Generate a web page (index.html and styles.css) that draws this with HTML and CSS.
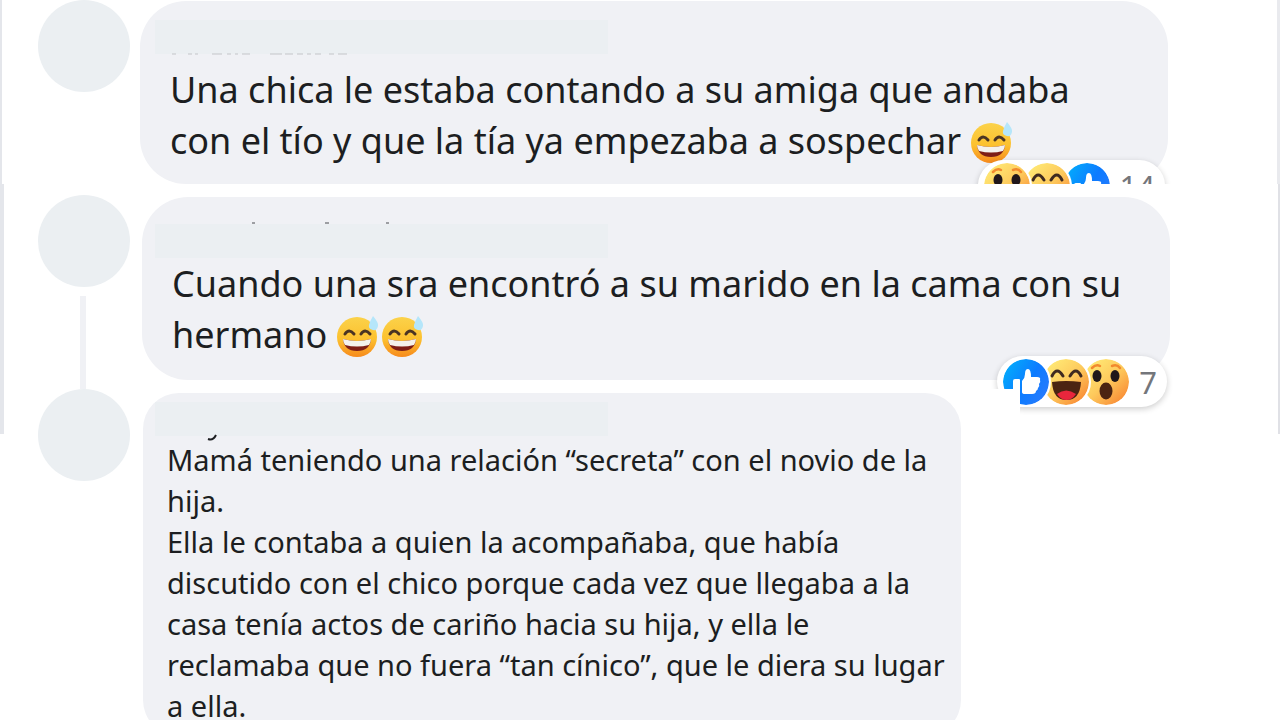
FILE: index.html
```html
<!DOCTYPE html>
<html lang="es">
<head>
	<meta charset="UTF-8">
	<title>Comentarios</title>
	<link rel="stylesheet" href="styles.css">
</head>
<body>
	<svg class="defs" aria-hidden="true">
		<defs>
			<linearGradient id="gSweat" x1="0" y1="0" x2="0" y2="1">
				<stop offset="0" stop-color="#fbd24a"/>
				<stop offset=".55" stop-color="#fcc12f"/>
				<stop offset="1" stop-color="#f78a1c"/>
			</linearGradient>
			<linearGradient id="gFace" x1=".15" y1=".1" x2=".9" y2=".9">
				<stop offset="0" stop-color="#ffe874"/>
				<stop offset=".5" stop-color="#fdc95c"/>
				<stop offset="1" stop-color="#f98a34"/>
			</linearGradient>
			<linearGradient id="gLike" x1="0" y1=".2" x2="1" y2=".8">
				<stop offset="0" stop-color="#02adfc"/>
				<stop offset=".55" stop-color="#0d7bff"/>
				<stop offset="1" stop-color="#2a7bfd"/>
			</linearGradient>
			<symbol id="sweat" viewBox="0 0 42 42">
				<circle cx="20" cy="21" r="20" fill="url(#gSweat)"/>
				<path d="M8 18q4-6 9 0M24 18q4-6 9 0" fill="none" stroke="#4a3423" stroke-width="3" stroke-linecap="round"/>
				<path d="M6 23q14 4 28 0q-1 12-14 12T6 23z" fill="#7e1d16"/>
				<path d="M6 23q14 4 28 0q0 3-2 6q-12 3-24 0q-2-3-2-6z" fill="#f4f1ec"/>
				<path d="M36 0q6 7 5 10q-1 5-5 4q-5-1-4-5q1-4 4-9z" fill="#b5e6fa"/>
			</symbol>
			<symbol id="like" viewBox="0 0 46 46">
				<circle cx="23" cy="23" r="23" fill="url(#gLike)"/>
				<path d="M10 22q0-2 2-2h4q1 0 1 1v12q0 1-1 1h-4q-2 0-2-2z" fill="#fff"/>
				<path d="M19 22q3-3 3-7q0-5 3-5q3 0 3 8h6q4 0 3 3q1 2-1 4q1 2-1 4q0 2-2 3q0 3-4 3h-7q-3 0-3-2z" fill="#fff"/>
			</symbol>
			<symbol id="haha" viewBox="0 0 46 46">
				<circle cx="23" cy="23" r="23" fill="url(#gFace)"/>
				<path d="M9 17q5-10 11 0M27 17q6-10 11 0" fill="none" stroke="#3f2a20" stroke-width="3" stroke-linecap="round"/>
				<path d="M9 23q14-2 29 0q-1 18-14.500 18T9 23z" fill="#4b2412"/>
				<path d="M14 35q9-7 19 0q-4 6-9.500 6T14 35z" fill="#e9263c"/>
			</symbol>
			<symbol id="wow" viewBox="0 0 46 46">
				<circle cx="23" cy="23" r="23" fill="url(#gFace)"/>
				<path d="M9 9q4-4 8-2M29 7q5-2 8 2" fill="none" stroke="#f28a2e" stroke-width="2.500" stroke-linecap="round"/>
				<ellipse cx="14" cy="17" rx="4.500" ry="6" fill="#20171a"/>
				<ellipse cx="32" cy="17" rx="4.500" ry="6" fill="#20171a"/>
				<ellipse cx="23" cy="32" rx="6.500" ry="8.500" fill="#4b2412"/>
			</symbol>
		</defs>
	</svg>

	<main>
		<article class="comment first">
			<div class="side"><div class="avatar"></div></div>
			<div class="bubble">
				<div class="name">
					<svg class="marks below" viewBox="0 0 190 2" aria-hidden="true"><path d="M2 0h4M18 0h4M25 0h3M42 0h10M57 0h4M65 0h3M72 0h8M100 0h12M115 0h8M127 0h6M137 0h4M145 0h6M159 0h5M168 0h9" stroke="#c3c5c9"/></svg>
				</div>
				<p>Una chica le estaba contando a su amiga que andaba<br>con el tío y que la tía ya empezaba a sospechar <svg class="emoji" role="img" aria-label="😅"><use href="#sweat"/></svg></p>
				<div class="reactions">
					<svg><use href="#wow"/></svg>
					<svg><use href="#haha"/></svg>
					<svg><use href="#like"/></svg>
					<span>14</span>
				</div>
			</div>
		</article>

		<article class="comment second">
			<div class="side"><div class="avatar"></div><div class="thread"></div></div>
			<div class="bubble">
				<div class="name">
					<svg class="marks above" viewBox="0 0 190 2" aria-hidden="true"><path d="M82 1h3M155 1h4M216 1h3" stroke="#4a4c50"/></svg>
				</div>
				<p>Cuando una sra encontró a su marido en la cama con su<br>hermano <svg class="emoji" role="img" aria-label="😅"><use href="#sweat"/></svg><svg class="emoji" role="img" aria-label="😅"><use href="#sweat"/></svg></p>
				<div class="reactions">
					<svg><use href="#like"/></svg>
					<svg><use href="#haha"/></svg>
					<svg><use href="#wow"/></svg>
					<span>7</span>
				</div>
			</div>
		</article>

		<article class="comment third">
			<div class="side"><div class="avatar"></div></div>
			<div class="bubble">
				<div class="name">
					<svg class="marks tail" viewBox="0 0 12 6" aria-hidden="true"><path d="M1 3q5 2 8-4" fill="none" stroke="#1c1e21" stroke-width="2"/></svg>
				</div>
				<p>Mamá teniendo una relación “secreta” con el novio de la<br>hija.<br>Ella le contaba a quien la acompañaba, que había<br>discutido con el chico porque cada vez que llegaba a la<br>casa tenía actos de cariño hacia su hija, y ella le<br>reclamaba que no fuera “tan cínico”, que le diera su lugar<br>a ella.</p>
			</div>
		</article>
	</main>
</body>
</html>
```
FILE: styles.css
```css
*{padding:0; margin:0; box-sizing:border-box;}
body{background:#fff; color:#1c1e21; font-family:"Noto Sans","Open Sans",sans-serif;}
main{height:100vh; overflow:hidden;}
.defs{position:absolute; width:0; height:0;}

.comment{display:flex; align-items:flex-start; position:relative; z-index:0;}
.side{flex:none; width:92px; display:flex; flex-direction:column; align-items:center;}
.avatar{width:92px; height:92px; border-radius:50%; background:#ebeff2;}
.thread{width:6px; height:140px; margin:9px 3px 0 0; background:#f0f1f5;}
.bubble{flex:1; position:relative; height:183px; padding:0 15px; border-radius:46px; background:#f0f1f5;}
.bubble p{font-size:36px; line-height:51px; white-space:nowrap;}
.name{position:relative; width:453px; max-width:100%; height:34px; background:#ebeff2;}
.marks{position:absolute; left:15px; width:190px; height:2px; overflow:visible;}
.below{top:100%;}
.above{bottom:100%;}
.tail{left:52px; top:100%; width:12px; height:6px;}
.emoji{width:42px; height:42px; margin-right:3px; vertical-align:-10px;}

.first{height:184px; overflow:hidden; padding:0 109px 0 36px; border-left:2px solid #e4e6eb; border-right:3px solid #e9eaee;}
.first .bubble{margin:1px 0 0 10px; padding-top:19px;}
.first p{padding:10px 0 0 15px;}

.second{height:250px; padding:11px 108px 0 34px; border-left:4px solid #e4e6eb; border-right:2px solid #e0e1e6;}
.second .bubble{margin:2px 0 0 12px; padding:27px 13px 0;}
.second p{padding:0 0 0 17px;}

.third{margin:-45px 260px 0 38px; background:#fff;}
.third .bubble{height:auto; margin:4px 59px 0 13px; padding:9px 12px 10px; border-radius:36px;}
.third p{padding:3px 0 0 12px; font-size:29px; line-height:41px;}

/* the pill hangs over the lower right corner of the bubble */
.reactions{position:absolute; right:3px; bottom:-27px; height:51px; padding:0 10px 0 4px; display:flex; align-items:center; border-radius:26px; background:#fff; box-shadow:0 2px 6px rgba(0,0,0,.2);}
.reactions svg{position:relative; z-index:1; flex:none; width:50px; height:50px; margin-right:-10px; padding:2px; border-radius:50%; background:#fff;}
.reactions svg:nth-child(1){z-index:3;}
.reactions svg:nth-child(2){z-index:2;}
.reactions span{margin-left:18px; font-size:31px; line-height:50px; color:#74767b;}
```
